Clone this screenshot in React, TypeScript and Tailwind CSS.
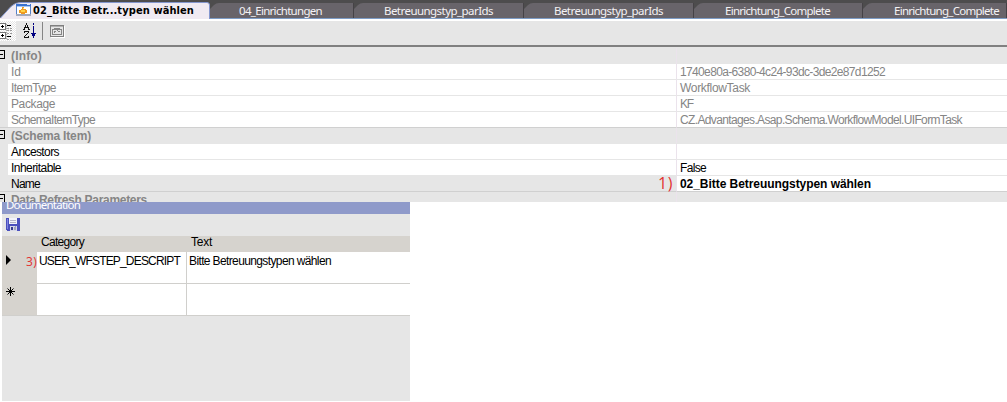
import { useLayoutEffect, useRef, useState } from "react";
import type { ReactNode } from "react";

/** Single line label whose letter spacing is adjusted to fill a given width. */
function Label({ w, className = "", children }: { w: number; className?: string; children: string }) {
  const ref = useRef<HTMLSpanElement>(null);
  const [spacing, setSpacing] = useState(0);
  useLayoutEffect(() => {
    if (ref.current) {
      const natural = ref.current.getBoundingClientRect().width - spacing * children.length;
      setSpacing((w - natural) / children.length);
    }
  }, [w, children]);
  return (
    <span ref={ref} className={`block w-max shrink-0 whitespace-pre ${className}`} style={{ letterSpacing: spacing }}>
      {children}
    </span>
  );
}

function Tab({ title, w, className }: { title: string; w: number; className: string }) {
  return (
    <div className={`relative flex h-[15px] shrink-0 items-center border-r border-[#454246] bg-[#68646a] ${className}`}>
      <svg className="absolute left-0 top-0" width="9" height="9" viewBox="0 0 9 9">
        <path d="M0 0H9Q6 0 4 2L0 6Z" fill="#4d4c4d" />
      </svg>
      <Label w={w} className="font-['Noto_Sans',sans-serif] text-[11.5px] leading-[14px] text-[#f4f2f5]">
        {title}
      </Label>
    </div>
  );
}

function Expander() {
  return (
    <svg className="block" width="8" height="16" viewBox="0 0 8 16" shapeRendering="crispEdges">
      <path d="M0 2.5H4.5V10.5H0" fill="none" stroke="#000" />
      <path d="M0 6.5H3" stroke="#000" />
    </svg>
  );
}

function Category({ title, w, className = "h-4 border-b border-[#e6e6e6]" }: { title: string; w: number; className?: string }) {
  return (
    <div className={`flex overflow-hidden bg-[#e6e6e6] ${className}`}>
      <div className="w-2 shrink-0">
        <Expander />
      </div>
      <div className="w-[668px] shrink-0 pl-[3px]">
        <Label w={w} className="text-[12px] font-bold leading-[16px] text-[#858585]">
          {title}
        </Label>
      </div>
      <div className="h-4 w-px bg-[#ebe3ec]" />
    </div>
  );
}

interface RowProps {
  name: string;
  nameW: number;
  value?: string;
  valueW?: number;
  muted?: boolean;
  selected?: boolean;
  last?: boolean;
  note?: ReactNode;
}

function Row({ name, nameW, value, valueW = 0, muted, selected, last, note }: RowProps) {
  const line = last ? "border-[#d0d0d0]" : "border-[#e6e6e6]";
  return (
    <div className={`flex h-4 text-[12px] leading-[17px] ${muted ? "text-[#858585]" : "text-black"}`}>
      <div className={`w-2 shrink-0 border-b bg-[#e6e6e6] ${line}`} />
      <div className={`flex w-[668px] shrink-0 justify-between border-b pl-[3px] pr-[3px] ${line} ${selected ? "bg-[#e6e6e6]" : "bg-white"}`}>
        <Label w={nameW}>{name}</Label>
        {note}
      </div>
      <div className={`min-w-0 grow border-b border-l bg-white pl-[3px] ${last ? "border-b-[#d0d0d0]" : "border-b-[#e6e6e6]"} border-l-[#ebe3ec]`}>
        {value && (
          <Label w={valueW} className={selected ? "font-bold" : ""}>
            {value}
          </Label>
        )}
      </div>
    </div>
  );
}

function TabStrip() {
  return (
    <div className="relative flex h-[19px] items-end border-b border-[#7d9cc6] bg-[#4d4c4d]">
      <div className="relative h-[18px] w-[210px] shrink-0">
        <svg className="absolute left-0 top-0" width="210" height="19" viewBox="0 0 210 19">
          <path d="M0 18.5L11 6.5Q15 2.5 21 2.5H207Q209.500 2.500 209.500 5V19H0Z" fill="#f0eaf2" stroke="#8496ce" />
          <path d="M0 18.500H209" stroke="#f0eaf2" />
        </svg>
        <div className="relative flex h-[18px] items-start pl-4 pt-1">
          <svg width="15" height="12" viewBox="0 0 15 12" shapeRendering="crispEdges">
            <rect x="0.500" y="0.500" width="14" height="11" fill="#fff" stroke="#5580c8" />
            <path d="M0 0H15V2H0Z" fill="#3a72d0" />
            <path d="M1 2H14V3H1Z" fill="#a9c8f4" />
            <path d="M11 0H14V1H11Z" fill="#d6e5ff" />
            <path d="M0 10H15V12H0Z" fill="#a3a9bc" />
            <path d="M3 6H5V5H6V3H8V5H10V6H11V9H9V10H5V9H3Z" fill="#ef9a20" />
            <path d="M5 6H9V8H5Z" fill="#ffd448" />
            <path d="M7 4H8V5H7Z" fill="#ffe78a" />
          </svg>
          <Label w={161} className="ml-[2px] font-['DejaVu_Sans_Condensed','DejaVu_Sans',sans-serif] text-[11px] font-bold leading-[14px] text-black">
            02_Bitte Betr...typen wählen
          </Label>
        </div>
      </div>
      <Tab title="04_Einrichtungen" w={83} className="w-[144px] pl-[29px]" />
      <Tab title="Betreuungstyp_parIds" w={109} className="w-[170px] pl-[30px]" />
      <Tab title="Betreuungstyp_parIds" w={109} className="w-[170px] pl-[30px]" />
      <Tab title="Einrichtung_Complete" w={105} className="w-[169px] pl-[31px]" />
      <Tab title="Einrichtung_Complete" w={105} className="w-[144px] pl-[31px]" />
    </div>
  );
}

function Toolbar() {
  return (
    <div className="h-7 border-b-2 border-t-2 border-b-[#808080] border-t-white bg-[#e6e6e6]">
      <svg width="70" height="24" viewBox="0 21 70 24" shapeRendering="crispEdges">
        <defs>
          <pattern id="check" width="2" height="2" patternUnits="userSpaceOnUse">
            <rect width="2" height="2" fill="#e6e6e6" />
            <path d="M0 0H1V1H0ZM1 1H2V2H1Z" fill="#fff" />
          </pattern>
        </defs>
        <rect x="0" y="21" width="16" height="20" fill="url(#check)" />
        <g fill="#fff" stroke="#777">
          <rect x="-0.500" y="23.500" width="6" height="6" />
          <rect x="-0.500" y="32.500" width="6" height="6" />
        </g>
        <path d="M1 26.500H4M2.500 25V28M1 35.500H4M2.500 34V37" stroke="#000" />
        <path d="M7 25.500H11M7 36.500H11" stroke="#000" />
        <path d="M7 28.500H12M7 30.500H12M7 33.500H12M7 39.500H11" stroke="#999" strokeDasharray="2 1" />
        <path d="M6.500 24V39" stroke="#aaa" strokeDasharray="1 1" />
        <g stroke="#111" fill="none">
          <path d="M26.500 23V25M25.500 25V27M27.500 25V27M24.500 27V30M28.500 27V30M25 27.500H28M23 29.500H25M28 29.500H30" />
          <path d="M24 31.500H29M28.500 32V33M27.500 33V34M26.500 34V35M25.500 35V36M24.500 36V37M24 37.500H29M24.500 31V33M28.500 36V38" />
        </g>
        <path d="M33 23H34V25H33ZM33 26H34V33H36V34H35V36H34V38H33V36H32V34H31V33H33Z" fill="#000080" />
        <path d="M42.500 22V40" stroke="#858585" />
        <rect x="50.500" y="25.500" width="13" height="11" fill="#e6e6e6" stroke="#808080" />
        <path d="M51 26.500H63" stroke="#b0b0b0" />
        <path d="M52.500 34.500V29.500H61.500V34.500Z" fill="none" stroke="#858585" />
        <path d="M54 28.500H60M54 31.500H56M58 31.500H60M54 32.500H55M57.500 29V31" stroke="#858585" />
        <path d="M51 37.500H65M64.500 26V38" stroke="#fff" />
      </svg>
    </div>
  );
}

function Documentation() {
  return (
    <section className="ml-[2px] h-[199px] w-[408px] bg-[#e6e6e6]">
      <div className="h-3 overflow-hidden bg-[#8f9aca]">
        <Label w={74} className="-mt-[4px] ml-[4px] font-['Noto_Sans',sans-serif] text-[11.5px] leading-[13px] text-white">
          Documentation
        </Label>
      </div>
      <div className="h-[22px] pl-1 pt-[4px]">
        <svg width="14" height="13" viewBox="0 0 14 13" shapeRendering="crispEdges">
          <path d="M0 0H13L14 1V13H1L0 12Z" fill="#4b50bd" />
          <path d="M1 1H2V11H1Z" fill="#8085df" />
          <path d="M3 0H11V6H3Z" fill="#f3f3fa" />
          <path d="M4 2H10V3H4ZM4 4H10V5H4Z" fill="#b4b5c8" />
          <path d="M4 8H11V13H4Z" fill="#d7d8e8" />
          <path d="M5 9H7V12H5Z" fill="#35398d" />
          <path d="M8 9L10 8V12H8Z" fill="#a0a3bc" />
        </svg>
      </div>
      <div className="flex h-4 bg-[#d6d3ce] text-[12px] leading-[13px] text-black">
        <div className="w-[189px] shrink-0 pl-[39px]">
          <Label w={43}>Category</Label>
        </div>
        <Label w={21}>Text</Label>
      </div>
      <div className="flex h-8 text-[12px] leading-[19px] text-black">
        <div className="flex w-[35px] shrink-0 justify-between bg-[#d6d3ce] pl-1">
          <svg className="mt-[3px]" width="6" height="11" viewBox="0 0 6 11">
            <path d="M0 0L5 5L0 10Z" fill="#000" />
          </svg>
          <Label w={11} className="font-['Open_Sans',sans-serif] text-[12px] leading-[20px] text-[#e33232]">
            3)
          </Label>
        </div>
        <div className="w-[150px] shrink-0 border-b border-r border-[#d0cfcc] bg-white pl-[2px]">
          <Label w={141}>USER_WFSTEP_DESCRIPT</Label>
        </div>
        <div className="grow border-b border-[#d0cfcc] bg-white pl-[2px]">
          <Label w={142}>Bitte Betreuungstypen wählen</Label>
        </div>
      </div>
      <div className="flex h-8">
        <div className="w-[35px] shrink-0 border-b border-[#d0cfcc] bg-[#d6d3ce] pl-1 pt-[3px]">
          <svg width="9" height="9" viewBox="0 0 9 9">
            <path d="M4.500 0V9M0 4.500H9M1.500 1.500L7.500 7.500M7.500 1.500L1.500 7.500" stroke="#000" strokeWidth="1" />
          </svg>
        </div>
        <div className="w-[150px] shrink-0 border-b border-r border-[#d0cfcc] bg-white" />
        <div className="grow border-b border-[#d0cfcc] bg-white" />
      </div>
    </section>
  );
}

export default function App() {
  return (
    <div className="h-[402px] w-[1007px] overflow-hidden bg-white font-['Liberation_Sans',sans-serif]">
      <TabStrip />
      <Toolbar />
      <Category title="(Info)" w={31} className="h-[17px] pt-px" />
      <Row name="Id" nameW={10} value="1740e80a-6380-4c24-93dc-3de2e87d1252" valueW={205} muted />
      <Row name="ItemType" nameW={45} value="WorkflowTask" valueW={70} muted />
      <Row name="Package" nameW={44} value="KF" valueW={13} muted />
      <Row name="SchemaItemType" nameW={84} value="CZ.Advantages.Asap.Schema.WorkflowModel.UIFormTask" valueW={282} muted last />
      <Category title="(Schema Item)" w={80} />
      <Row name="Ancestors" nameW={48} />
      <Row name="Inheritable" nameW={50} value="False" valueW={26} />
      <Row
        name="Name"
        nameW={29}
        value="02_Bitte Betreuungstypen wählen"
        valueW={191}
        selected
        last
        note={
          <Label w={15} className="font-['Open_Sans',sans-serif] text-[16px] leading-[15px] text-[#e33232]">
            1)
          </Label>
        }
      />
      <Category title="Data Refresh Parameters" w={136} className="h-[10px]" />
      <Documentation />
    </div>
  );
}
